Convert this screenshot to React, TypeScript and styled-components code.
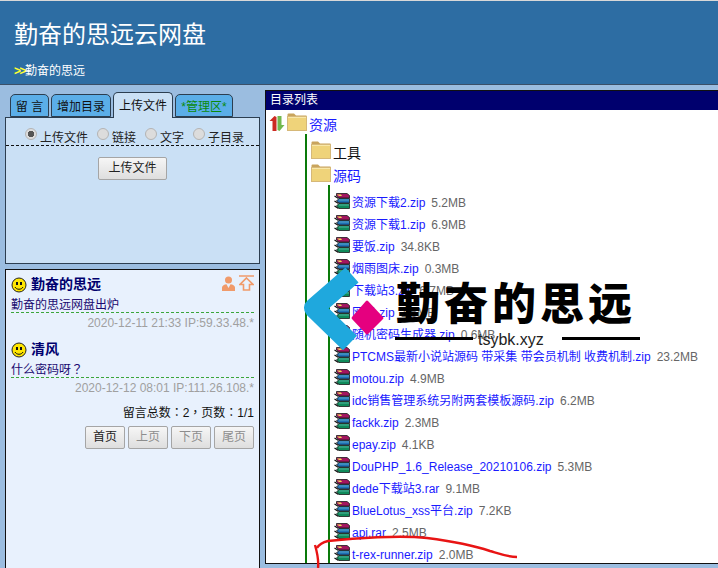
import React from "react";
import styled, { createGlobalStyle } from "styled-components";

const GlobalStyle = createGlobalStyle`
  html, body {
    margin: 0;
    padding: 0;
    height: 568px;
    overflow: hidden;
    background: #9bbde0;
    font-family: "Liberation Sans", "Noto Sans CJK SC", sans-serif;
    font-size: 12px;
  }
`;

const Page = styled.div`
  position: relative;
  width: 718px;
  height: 568px;
  overflow: hidden;
  background: #9bbde0;
`;

const Header = styled.header`
  box-sizing: border-box;
  height: 85px;
  background: #2d6da3;
  border-top: 1px solid #d8d8d8;
  border-bottom: 1px solid #3b5068;
  padding: 19px 0 0 14px;
  color: #fff;
`;

const SiteTitle = styled.h1`
  margin: 0;
  font-size: 24px;
  line-height: 30px;
  font-weight: 400;
`;

const SubTitle = styled.div`
  margin-top: 13px;
  font-size: 12px;
  line-height: 16px;
  span {
    color: #ffff33;
    font-weight: 700;
    letter-spacing: -1.5px;
  }
`;

const Main = styled.div`
  display: flex;
  gap: 5px;
  padding: 5px 0 0 5px;
`;

const LeftColumn = styled.div`
  flex: none;
  width: 255px;
  display: flex;
  flex-direction: column;
`;

const Tabs = styled.div`
  display: flex;
  align-items: flex-end;
  gap: 2px;
  padding-left: 5px;
  height: 27px;
`;

const Tab = styled.div<{ $active?: boolean; $w: number; $green?: boolean }>`
  box-sizing: border-box;
  flex: none;
  width: ${(p) => p.$w}px;
  height: ${(p) => (p.$active ? 26 : 23)}px;
  margin-bottom: ${(p) => (p.$active ? -1 : 0)}px;
  border: 1px solid #2c3e50;
  border-bottom: ${(p) => (p.$active ? "none" : "1px solid #2c3e50")};
  border-radius: 5px 5px 0 0;
  background: ${(p) => (p.$active ? "#cae0f5" : "#5baee8")};
  color: ${(p) => (p.$green ? "#0a8a0a" : "#111")};
  font-size: 12px;
  line-height: ${(p) => (p.$active ? 27 : 24)}px;
  text-align: center;
  white-space: pre;
  position: relative;
  z-index: 1;
`;

const UploadPanel = styled.div`
  box-sizing: border-box;
  height: 147px;
  background: #cae0f5;
  border: 1px solid #2c3e50;
`;

const RadioRow = styled.div`
  display: flex;
  height: 27px;
  padding-left: 19px;
  border-bottom: 1px dashed #111;
`;

const RadioItem = styled.label<{ $gap: number }>`
  display: flex;
  margin-right: ${(p) => p.$gap}px;
  color: #222;
  font-size: 12px;
  line-height: 16px;
  padding-top: 12px;
`;

const RadioDot = styled.span<{ $on?: boolean }>`
  box-sizing: border-box;
  width: 12px;
  height: 12px;
  margin: -2px 3px 0 0;
  border-radius: 50%;
  border: 1px solid #b4b4b4;
  background: ${(p) => (p.$on ? "radial-gradient(circle, #555 0 3px, #ddd 3.5px)" : "#dcdcdc")};
`;

const CenterRow = styled.div`
  display: flex;
  justify-content: center;
  padding-top: 11px;
`;

const GreyButton = styled.div<{ $w: number; $muted?: boolean }>`
  box-sizing: border-box;
  width: ${(p) => p.$w}px;
  height: 23px;
  border: 1px solid #a5a5a5;
  border-radius: 2px;
  background: linear-gradient(#f6f6f6, #dedede);
  color: ${(p) => (p.$muted ? "#8d8d8d" : "#222")};
  font-size: 12px;
  line-height: 21px;
  text-align: center;
`;

const BoardPanel = styled.div`
  box-sizing: border-box;
  height: 300px;
  margin-top: 5px;
  padding: 4px 5px 0 5px;
  background: #e8f1fd;
  border: 1px solid #111;
  border-bottom: none;
`;

const Message = styled.div`
  position: relative;
  margin-bottom: 6px;
`;

const MessageHead = styled.div`
  display: flex;
  align-items: center;
  gap: 4px;
  height: 21px;
  color: #00006e;
  font-size: 14px;
  font-weight: 700;
`;

const MessageName = styled.span`
  margin-top: -4px;
`;

const MessageBody = styled.div`
  height: 17px;
  color: #1a0a70;
  font-family: "Liberation Sans", "Noto Sans CJK TC", sans-serif;
  font-size: 12px;
  line-height: 21px;
  border-bottom: 1px dashed #3aa53a;
`;

const MessageMeta = styled.div`
  color: #a0a0a0;
  font-size: 12px;
  line-height: 20px;
  text-align: right;
`;

const AdminIcons = styled.div`
  position: absolute;
  top: 1px;
  right: 0;
  display: flex;
  align-items: center;
  gap: 4px;
`;

const PageInfo = styled.div`
  margin-top: 2px;
  font-family: "Liberation Sans", "Noto Sans CJK TC", sans-serif;
  font-size: 12px;
  line-height: 18px;
  color: #111;
  text-align: right;
`;

const Pager = styled.div`
  display: flex;
  justify-content: flex-end;
  gap: 3px;
  margin-top: 4px;
`;

const TreePanel = styled.div`
  box-sizing: border-box;
  flex: none;
  width: 460px;
  height: 474px;
  background: #fff;
  border: 1px solid #111;
  overflow: hidden;
`;

const TreeTitle = styled.div`
  height: 19px;
  padding-left: 4px;
  background: #00006e;
  color: #fff;
  font-size: 12px;
  line-height: 19px;
`;

const RootRow = styled.div`
  display: flex;
  align-items: flex-end;
  gap: 2px;
  height: 21px;
  padding-left: 3px;
  margin-bottom: 3px;
`;

const FolderRow = styled.div`
  display: flex;
  align-items: flex-end;
  height: 23px;
`;

const FolderName = styled.span<{ $dark?: boolean; $root?: boolean }>`
  color: ${(p) => (p.$dark ? "#111" : "#1a1aff")};
  font-size: 14px;
  line-height: 17px;
  margin-left: ${(p) => (p.$root ? 0 : 2)}px;
  margin-bottom: -3px;
`;

const OuterBranch = styled.div`
  margin-left: 39px;
  padding: 2px 0 0 4px;
  border-left: 2px solid #0a7a0a;
`;

const InnerBranch = styled.div`
  margin: 3px 0 0 17px;
  padding: 4px 0 4px 4px;
  border-left: 2px solid #0a7a0a;
`;

const FileRow = styled.div`
  display: flex;
  align-items: flex-end;
  height: 22px;
  white-space: nowrap;
`;

const FileIconSlot = styled.span`
  display: flex;
  margin-bottom: 2px;
`;

const FileName = styled.span`
  color: #1a1aff;
  font-size: 12px;
  line-height: 15px;
  margin-left: 2px;
`;

const FileSize = styled.span`
  color: #666;
  font-size: 12px;
  line-height: 15px;
  margin-left: 6px;
`;

const Watermark = styled.div`
  position: absolute;
  left: 302px;
  top: 270px;
  width: 340px;
  height: 110px;
`;

const LogoMark = styled.svg`
  position: absolute;
  left: -2px;
  top: -10px;
`;

const WatermarkTitle = styled.div`
  position: absolute;
  left: 94px;
  top: 7px;
  color: #000;
  font-family: "Noto Sans CJK SC", sans-serif;
  font-size: 44px;
  font-weight: 900;
  letter-spacing: 4px;
  line-height: 48px;
  white-space: nowrap;
`;

const WatermarkUrl = styled.div`
  position: absolute;
  left: 176px;
  top: 60px;
  color: #222;
  font-size: 16px;
  line-height: 20px;
`;

const WatermarkRule = styled.div<{ $left: number }>`
  position: absolute;
  left: ${(p) => p.$left}px;
  top: 67px;
  width: 78px;
  height: 3px;
  background: #000;
`;

const Scribble = styled.svg`
  position: absolute;
  left: 310px;
  top: 530px;
`;

const Smiley = () => (
  <svg width="16" height="16" viewBox="0 0 16 16">
    <circle cx="8" cy="8" r="7" fill="#ffe600" stroke="#222" strokeWidth="1" />
    <rect x="5" y="5" width="2" height="3" fill="#111" />
    <rect x="9" y="5" width="2" height="3" fill="#111" />
    <path d="M4 10c1.5 3 6.500 3 8 0" fill="none" stroke="#111" strokeWidth="1" />
  </svg>
);

const Folder = () => (
  <svg width="20" height="18" viewBox="0 0 20 18">
    <path d="M0.500 4V1.500A1 1 0 0 1 1.500 0.500H7L9 2.500H19.500V4Z" fill="#c9a45c" />
    <rect x="0.500" y="3.500" width="19" height="14" fill="#efd37a" stroke="#d6b878" />
    <path d="M1 4.500H19" stroke="#f8e7a8" strokeWidth="1" />
  </svg>
);

const RarIcon = () => (
  <svg width="16" height="16" viewBox="0 0 16 16">
    <path d="M2.500 0.500H13L15.500 2.500V5H5L2.500 3Z" fill="#a3155f" stroke="#1a1a1a" strokeWidth="0.800" />
    <path d="M3 1.500H7L8 3H5Z" fill="#eedc55" />
    <path d="M5 5.500H15.500V10H5L2.500 8Z" fill="#1f6fb5" stroke="#1a1a1a" strokeWidth="0.800" />
    <path d="M5 10.500H15.500V15.500H5L2.500 13Z" fill="#0f8a5a" stroke="#1a1a1a" strokeWidth="0.800" />
    <path d="M0.500 3L4.500 5.500M0.500 8L4.500 10.500M0.500 13L4.500 15.500" stroke="#111" strokeWidth="1.200" fill="none" />
    <path d="M5 7H15M5 12H15" stroke="#7fd0d0" strokeWidth="0.600" />
  </svg>
);

const SortArrows = () => (
  <svg width="16" height="15" viewBox="0 0 16 15">
    <path d="M5.500 0L7.500 1V15H3.500V5H0.500Z" fill="#cc2a22" />
    <path d="M8.500 0H12.500V9H15.500L10.500 15L8.500 14Z" fill="#72b84e" />
  </svg>
);

const UserIcon = () => (
  <svg width="13" height="15" viewBox="0 0 13 15">
    <circle cx="6.500" cy="4" r="3.500" fill="#f09a6a" />
    <path d="M0 15V11.500C0 9.500 2.500 8.500 4.500 8.200L6.500 12L8.500 8.200C10.500 8.500 13 9.500 13 11.500V15Z" fill="#f09a6a" />
  </svg>
);

const TopIcon = () => (
  <svg width="15" height="16" viewBox="0 0 15 16">
    <path d="M0 1H15" stroke="#f09a6a" strokeWidth="1.500" />
    <path d="M7.500 3L14 9.500H10.500V15H4.500V9.500H1Z" fill="none" stroke="#f09a6a" strokeWidth="1.600" />
  </svg>
);

const files: [string, string][] = [
  ["资源下载2.zip", "5.2MB"],
  ["资源下载1.zip", "6.9MB"],
  ["要饭.zip", "34.8KB"],
  ["烟雨图床.zip", "0.3MB"],
  ["下载站3.zip", "6.7MB"],
  ["网盘.zip", "1.5MB"],
  ["随机密码生成器.zip", "0.6MB"],
  ["PTCMS最新小说站源码 带采集 带会员机制 收费机制.zip", "23.2MB"],
  ["motou.zip", "4.9MB"],
  ["idc销售管理系统另附两套模板源码.zip", "6.2MB"],
  ["fackk.zip", "2.3MB"],
  ["epay.zip", "4.1KB"],
  ["DouPHP_1.6_Release_20210106.zip", "5.3MB"],
  ["dede下载站3.rar", "9.1MB"],
  ["BlueLotus_xss平台.zip", "7.2KB"],
  ["api.rar", "2.5MB"],
  ["t-rex-runner.zip", "2.0MB"],
];

export default function App() {
  return (
    <Page>
      <GlobalStyle />
      <Header>
        <SiteTitle>勤奋的思远云网盘</SiteTitle>
        <SubTitle>
          <span>&gt;&gt;</span>勤奋的思远
        </SubTitle>
      </Header>
      <Main>
        <LeftColumn>
          <Tabs>
            <Tab $w={39}>留 言</Tab>
            <Tab $w={60}>增加目录</Tab>
            <Tab $w={60} $active>
              上传文件
            </Tab>
            <Tab $w={58} $green>
              *管理区*
            </Tab>
          </Tabs>
          <UploadPanel>
            <RadioRow>
              <RadioItem $gap={9}>
                <RadioDot $on />
                上传文件
              </RadioItem>
              <RadioItem $gap={9}>
                <RadioDot />
                链接
              </RadioItem>
              <RadioItem $gap={9}>
                <RadioDot />
                文字
              </RadioItem>
              <RadioItem $gap={0}>
                <RadioDot />
                子目录
              </RadioItem>
            </RadioRow>
            <CenterRow>
              <GreyButton $w={69}>上传文件</GreyButton>
            </CenterRow>
          </UploadPanel>
          <BoardPanel>
            <Message>
              <MessageHead>
                <Smiley />
                <MessageName>勤奋的思远</MessageName>
              </MessageHead>
              <AdminIcons>
                <UserIcon />
                <TopIcon />
              </AdminIcons>
              <MessageBody>勤奋的思远网盘出炉</MessageBody>
              <MessageMeta>2020-12-11 21:33 IP:59.33.48.*</MessageMeta>
            </Message>
            <Message>
              <MessageHead>
                <Smiley />
                <MessageName>清风</MessageName>
              </MessageHead>
              <MessageBody>什么密码呀？</MessageBody>
              <MessageMeta>2020-12-12 08:01 IP:111.26.108.*</MessageMeta>
            </Message>
            <PageInfo>留言总数：2，页数：1/1</PageInfo>
            <Pager>
              <GreyButton $w={40}>首页</GreyButton>
              <GreyButton $w={40} $muted>
                上页
              </GreyButton>
              <GreyButton $w={40} $muted>
                下页
              </GreyButton>
              <GreyButton $w={40} $muted>
                尾页
              </GreyButton>
            </Pager>
          </BoardPanel>
        </LeftColumn>
        <TreePanel>
          <TreeTitle>目录列表</TreeTitle>
          <RootRow>
            <SortArrows />
            <Folder />
            <FolderName $root>资源</FolderName>
          </RootRow>
          <OuterBranch>
            <FolderRow>
              <Folder />
              <FolderName $dark>工具</FolderName>
            </FolderRow>
            <FolderRow>
              <Folder />
              <FolderName>源码</FolderName>
            </FolderRow>
            <InnerBranch>
              {files.map(([name, size]) => (
                <FileRow key={name}>
                  <FileIconSlot>
                    <RarIcon />
                  </FileIconSlot>
                  <FileName>{name}</FileName>
                  <FileSize>{size}</FileSize>
                </FileRow>
              ))}
            </InnerBranch>
          </OuterBranch>
        </TreePanel>
      </Main>
      <Watermark>
        {/* coordinates are page pixels minus (300, 260) */}
        <LogoMark width="100" height="110" viewBox="0 0 100 110">
          <path d="M52 15L14 48L50 83" fill="none" stroke="#1fa8dd" strokeWidth="20" strokeLinejoin="round" />
          <path d="M68 41L83 57Q84 58 83 59L68 74Q68 75 66 74L52 59Q51 58 52 57L66 41Q67 40 68 41Z" fill="#e5007f" />
        </LogoMark>
        <WatermarkTitle>勤奋的思远</WatermarkTitle>
        <WatermarkRule $left={93} />
        <WatermarkRule $left={260} />
        <WatermarkUrl>tsybk.xyz</WatermarkUrl>
      </Watermark>
      <Scribble width="212" height="38" viewBox="0 0 212 38">
        <path
          d="M8 38C9 30 7 22 5 15M7 18C10 13 14 12 18 11C45 8 90 5 117 8C140 11 165 16 180 21C190 24 198 27 207 27"
          fill="none"
          stroke="#e81414"
          strokeWidth="2.400"
        />
      </Scribble>
    </Page>
  );
}
